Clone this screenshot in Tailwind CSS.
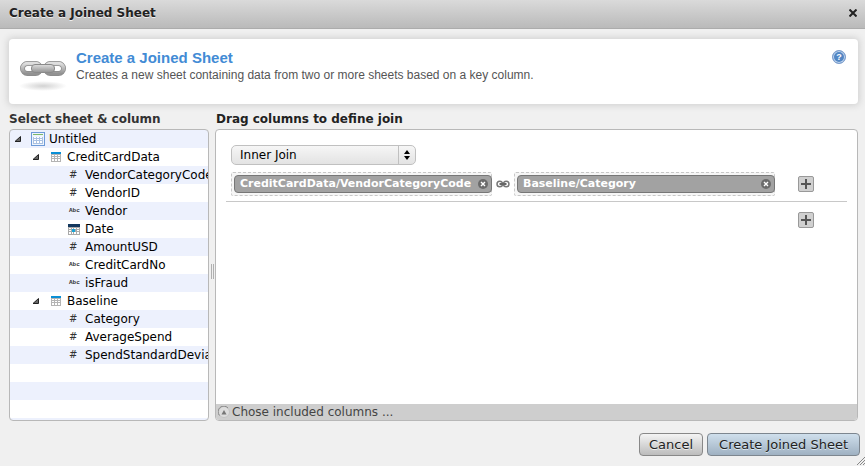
<!DOCTYPE html>
<html lang="en">
<head>
    <meta charset="UTF-8">
    <meta name="viewport" content="width=device-width, initial-scale=1">
    <script src="https://cdn.jsdelivr.net/npm/@tailwindcss/browser@4"></script>
    <title>Create a Joined Sheet</title>
</head>
<body class="h-screen flex flex-col overflow-hidden bg-[#f0f0f0] font-['DejaVu_Sans',sans-serif] text-xs text-black">

    <!-- Icons used more than once -->
    <svg class="hidden">
        <symbol id="arrow" viewBox="0 0 8 8"><path d="M6.500 1.500V6.500H1z" fill="#666" stroke="#222" stroke-width="1"/></symbol>
        <symbol id="sheet" viewBox="0 0 10 10" shape-rendering="crispEdges">
            <path d="M0 0h10v10H0z" fill="#b4b4b4"/>
            <path d="M0 0h10v2H0z" fill="#0a8fd6"/>
            <path d="M1 3h2v1H1zM4 3h2v1H4zM7 3h2v1H7zM1 5h2v1H1zM4 5h2v1H4zM7 5h2v1H7zM1 7h2v2H1zM4 7h2v2H4zM7 7h2v2H7z" fill="#fff"/>
        </symbol>
        <symbol id="remove" viewBox="0 0 10 10"><circle cx="5" cy="5" r="5" fill="#6b6b6b"/><path d="m3 3 4 4m0-4L3 7" stroke="#fff" stroke-width="1.400"/></symbol>
        <symbol id="plus" viewBox="0 0 10 10"><path d="M5 0v10M0 5h10" stroke="#555" stroke-width="2"/></symbol>
    </svg>

    <header class="h-[29px] shrink-0 flex items-center justify-between pl-[9px] pr-2 pb-[2px] border-b border-[#acacac] bg-linear-to-b from-[#dadada] to-[#bababa]">
        <h1 class="font-bold text-[#222] text-shadow-[0_1px_0_#eee]">Create a Joined Sheet</h1>
        <button aria-label="Close" class="text-[#222]">
            <svg class="size-2" viewBox="0 0 8 8"><path d="m.5.5 7 7m0-7-7 7" stroke="currentColor" stroke-width="2"/></svg>
        </button>
    </header>

    <main class="grow min-h-0 flex flex-col pr-[7px] pl-[9px] pt-[10px]">
        <section class="h-[65px] shrink-0 flex rounded bg-white pl-[10px] pr-3 shadow-[0_0_6px_2px_#d4d4d4] font-['Liberation_Sans',Arial,sans-serif]">
            <svg class="w-12 h-10 mt-4 mr-[9px]" viewBox="0 0 48 40">
                <defs>
                    <linearGradient id="metal" x2="0" y2="1"><stop stop-color="#dedede"/><stop offset="1" stop-color="#929292"/></linearGradient>
                    <radialGradient id="ground"><stop stop-color="#d2d2d2"/><stop offset="1" stop-color="#fff"/></radialGradient>
                </defs>
                <ellipse cx="24" cy="31" rx="24" ry="5" fill="url(#ground)"/>
                <g fill="none">
                    <rect x="3.500" y="8.500" width="18" height="10" rx="5" stroke="#8a8a8a" stroke-width="5"/>
                    <rect x="26.500" y="8.500" width="18" height="10" rx="5" stroke="#8a8a8a" stroke-width="5"/>
                    <rect x="3.500" y="8.500" width="18" height="10" rx="5" stroke="url(#metal)" stroke-width="3.600"/>
                    <rect x="26.500" y="8.500" width="18" height="10" rx="5" stroke="url(#metal)" stroke-width="3.600"/>
                </g>
                <rect x="12.500" y="9.500" width="23" height="8" rx="3.500" fill="url(#metal)" stroke="#8a8a8a"/>
            </svg>
            <div class="grow pt-[10px]">
                <h2 class="text-[15px] leading-[18px] font-bold text-[#428bd5]">Create a Joined Sheet</h2>
                <p class="leading-4 text-[#555]">Creates a new sheet containing data from two or more sheets based on a key column.</p>
            </div>
            <button aria-label="Help" class="self-start mt-[11px] size-[14px] flex items-center justify-center rounded-full border border-[#7f9fcd] bg-[#5286c4] inset-ring inset-ring-[#c5d8f0] text-[9px] leading-none font-bold text-white">?</button>
        </section>

        <div class="grow min-h-0 flex pt-[6px]">
            <section class="w-[200px] shrink-0 flex flex-col">
                <h3 class="h-[19px] leading-[18px] font-bold text-[#333]">Select sheet &amp; column</h3>
                <ul class="h-[292px] overflow-hidden rounded border border-[#b8b8b8] bg-white bg-[repeating-linear-gradient(#edf1fd_0_18px,#fff_18px_36px)] *:flex *:h-[18px] *:items-center *:whitespace-nowrap">
                    <li class="pl-1">
                        <svg class="size-2 mr-[9px]"><use href="#arrow"/></svg>
                        <svg class="size-[14px] mr-1" viewBox="0 0 14 14" shape-rendering="crispEdges">
                            <path d="M.5.5h13v13H.5z" fill="#eef4fc" stroke="#6d9bd8"/>
                            <path d="M2 2h10v1H2z" fill="#7cb86a"/>
                            <path d="M2 5h10v7H2z" fill="#a9c1e2"/>
                            <path d="M3 5h2v1H3zM6 5h2v1H6zM9 5h2v1H9zM3 7h2v1H3zM6 7h2v1H6zM9 7h2v1H9zM3 9h2v2H3zM6 9h2v2H6zM9 9h2v2H9z" fill="#fff"/>
                        </svg>
                        Untitled
                    </li>
                    <li class="pl-[22px]"><svg class="size-2 mr-[11px]"><use href="#arrow"/></svg><svg class="size-[10px] mr-[6px]"><use href="#sheet"/></svg>CreditCardData</li>
                    <li class="pl-[59px]"><span class="w-4 shrink-0 text-[10px] text-[#333]">#</span>VendorCategoryCode</li>
                    <li class="pl-[59px]"><span class="w-4 shrink-0 text-[10px] text-[#333]">#</span>VendorID</li>
                    <li class="pl-[59px]"><span class="w-4 shrink-0 font-['Liberation_Mono',monospace] text-[6px] font-bold text-[#333]">Abc</span>Vendor</li>
                    <li class="pl-[58px]">
                        <svg class="w-3 h-[11px] mr-[5px]" viewBox="0 0 12 11" shape-rendering="crispEdges">
                            <path d="M0 0h12v11H0z" fill="#aaa"/>
                            <path d="M0 0h12v3H0z" fill="#12365c"/>
                            <path d="M1 4h2v1H1zM4 4h1v1H4zM6 4h2v1H6zM9 4h2v1H9zM1 6h2v1H1zM9 6h2v1H9zM1 8h2v2H1zM4 8h1v2H4zM6 8h2v2H6zM9 8h2v2H9z" fill="#fff"/>
                            <path d="M4 5h3v3H4z" fill="#19a5d8"/>
                        </svg>
                        Date
                    </li>
                    <li class="pl-[59px]"><span class="w-4 shrink-0 text-[10px] text-[#333]">#</span>AmountUSD</li>
                    <li class="pl-[59px]"><span class="w-4 shrink-0 font-['Liberation_Mono',monospace] text-[6px] font-bold text-[#333]">Abc</span>CreditCardNo</li>
                    <li class="pl-[59px]"><span class="w-4 shrink-0 font-['Liberation_Mono',monospace] text-[6px] font-bold text-[#333]">Abc</span>isFraud</li>
                    <li class="pl-[22px]"><svg class="size-2 mr-[11px]"><use href="#arrow"/></svg><svg class="size-[10px] mr-[6px]"><use href="#sheet"/></svg>Baseline</li>
                    <li class="pl-[59px]"><span class="w-4 shrink-0 text-[10px] text-[#333]">#</span>Category</li>
                    <li class="pl-[59px]"><span class="w-4 shrink-0 text-[10px] text-[#333]">#</span>AverageSpend</li>
                    <li class="pl-[59px]"><span class="w-4 shrink-0 text-[10px] text-[#333]">#</span>SpendStandardDevia</li>
                </ul>
            </section>

            <!-- Splitter -->
            <div class="w-[6px] shrink-0 flex justify-center pt-[154px]">
                <span class="w-[3px] h-[15px] border-x border-[#b0b0b0]"></span>
            </div>

            <section class="grow min-w-0 flex flex-col">
                <h3 class="h-[19px] pl-px leading-[18px] font-bold text-[#222]">Drag columns to define join</h3>
                <div class="h-[292px] flex flex-col overflow-hidden rounded border border-[#b8b8b8] bg-white">
                    <div class="grow pt-[15px] px-[10px]">
                        <div class="relative ml-[5px] w-[185px]">
                            <select aria-label="Join type" class="block w-full h-5 appearance-none rounded-[5px] border border-[#c0c0c0] bg-linear-to-b from-[#f6f6f6] to-[#e3e3e3] pl-2">
                                <option>Inner Join</option>
                                <option>Outer Join</option>
                            </select>
                            <span class="pointer-events-none absolute inset-y-px right-px w-[17px] border-l border-[#c0c0c0] flex items-center justify-center">
                                <svg class="w-[6px] h-[10px]" viewBox="0 0 6 10"><path d="m3 0 3 4H0zM3 10 0 6h6z"/></svg>
                            </span>
                        </div>
                        <div class="flex items-center mt-[7px] pl-[5px] pb-[5px] border-b border-[#c8c8c8] font-bold text-[11px] text-white">
                            <div class="w-[261px] h-6 rounded-xs border border-dashed border-[#c8c8c8] bg-[#f6f6f6] p-[2px]">
                                <div class="w-[258px] h-[18px] flex items-center justify-between rounded border border-[#777] bg-[#a2a2a2] pl-[5px] pr-[3px]">
                                    CreditCardData/VendorCategoryCode
                                    <button aria-label="Remove CreditCardData/VendorCategoryCode"><svg class="size-[10px]"><use href="#remove"/></svg></button>
                                </div>
                            </div>
                            <svg class="w-[14px] h-[8px] mx-1" viewBox="0 0 14 8" fill="none">
                                <g stroke="#777" stroke-width="1.500"><rect x="1" y="1.250" width="5.500" height="5.500" rx="2.750"/><rect x="7.500" y="1.250" width="5.500" height="5.500" rx="2.750"/></g>
                                <path d="M3.500 4h7" stroke="#666" stroke-width="2"/>
                            </svg>
                            <div class="w-[261px] h-6 rounded-xs border border-dashed border-[#c8c8c8] bg-[#f6f6f6] p-[2px]">
                                <div class="w-[258px] h-[18px] flex items-center justify-between rounded border border-[#777] bg-[#a2a2a2] pl-[5px] pr-[3px]">
                                    Baseline/Category
                                    <button aria-label="Remove Baseline/Category"><svg class="size-[10px]"><use href="#remove"/></svg></button>
                                </div>
                            </div>
                            <button aria-label="Add column" class="ml-[23px] size-4 flex items-center justify-center rounded-xs border border-[#999] bg-[#d0d0d0]"><svg class="size-[10px]"><use href="#plus"/></svg></button>
                        </div>
                        <div class="flex pl-[572px] pt-[10px]">
                            <button aria-label="Add sheet" class="size-4 flex items-center justify-center rounded-xs border border-[#999] bg-[#d0d0d0]"><svg class="size-[10px]"><use href="#plus"/></svg></button>
                        </div>
                    </div>
                    <button class="h-4 flex items-center pl-[2px] bg-[#cecece] text-[#444]">
                        <svg class="size-3 mr-[2px]" viewBox="0 0 12 12">
                            <circle cx="6" cy="6" r="5.500" fill="#ddd" stroke="#c4c4c4"/><path d="M1.500 9.500A5.500 5.500 0 0 1 10 2" fill="none" stroke="#888"/><path d="m6 4 2.500 4.500h-5z" fill="#777"/>
                        </svg>
                        Chose included columns ...
                    </button>
                </div>
            </section>
        </div>
    </main>

    <footer class="relative shrink-0 h-[33px] flex justify-end gap-1 pr-[5px]">
        <button class="h-[23px] px-[9px] rounded border border-[#888] bg-linear-to-b from-[#f4f4f4] to-[#bcbcbc] text-[13px] leading-5 text-[#222] text-shadow-[0_1px_0_#eee]">Cancel</button>
        <button class="h-[23px] px-[11px] rounded border border-[#7d868f] bg-linear-to-b from-[#cfdfec] to-[#9fb1c2] text-[13px] leading-5 text-[#222] text-shadow-[0_1px_0_#dde8f0]">Create Joined Sheet</button>
        <svg class="absolute right-0 bottom-px size-2" viewBox="0 0 8 8"><path d="M0 8l8-8M3 8l5-5M6 8l2-2" stroke="#888"/></svg>
    </footer>
</body>
</html>
